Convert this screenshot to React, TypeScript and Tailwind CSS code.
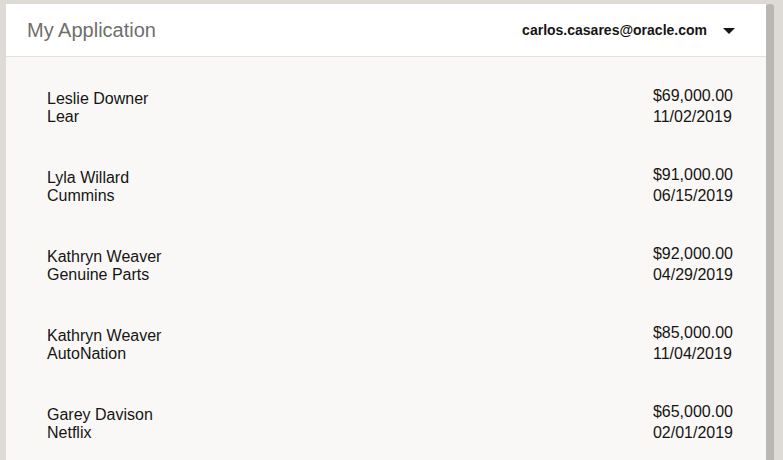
import React from "react";

interface Deal {
  name: string;
  company: string;
  amount: string;
  date: string;
}

const deals: Deal[] = [
  { name: "Leslie Downer", company: "Lear", amount: "$69,000.00", date: "11/02/2019" },
  { name: "Lyla Willard", company: "Cummins", amount: "$91,000.00", date: "06/15/2019" },
  { name: "Kathryn Weaver", company: "Genuine Parts", amount: "$92,000.00", date: "04/29/2019" },
  { name: "Kathryn Weaver", company: "AutoNation", amount: "$85,000.00", date: "11/04/2019" },
  { name: "Garey Davison", company: "Netflix", amount: "$65,000.00", date: "02/01/2019" },
];

const DealRow: React.FC<{ deal: Deal }> = ({ deal }) => (
  <div className="h-[79px] shrink-0 flex items-center pl-[41px] pr-[33px]">
    <div className="flex w-full items-end justify-between">
      <div className="text-[16px] leading-[18px] mb-[1px]">
        <div>{deal.name}</div>
        <div>{deal.company}</div>
      </div>
      <div className="text-[16px] leading-[21px]">
        <div>{deal.amount}</div>
        <div>{deal.date}</div>
      </div>
    </div>
  </div>
);

export default function App() {
  return (
    <div className="h-[460px] w-[783px] overflow-hidden bg-[#dedbd6] flex pt-[4px] pl-[6px] font-['Liberation_Sans',Arial,sans-serif] text-[#161513]">
      <div className="w-[760px] flex flex-col">
        <header className="h-[53px] shrink-0 bg-white border-b border-[#e3e1de] flex items-center justify-between pl-[21px] pr-[31px]">
          <div className="text-[20px] text-[#6f6e6c]">My Application</div>
          <div className="flex items-center gap-[16px]">
            <span className="text-[14px] font-bold text-[#161513]">carlos.casares@oracle.com</span>
            <svg width="12" height="6" viewBox="0 0 12 6" className="mt-[1px]">
              <path d="M0 0 L12 0 L6 6 Z" fill="#161513" />
            </svg>
          </div>
        </header>
        <main className="flex-1 bg-[#f9f8f6] pt-[9px] flex flex-col">
          {deals.map((d, i) => (
            <DealRow key={i} deal={d} />
          ))}
        </main>
      </div>
      <div className="w-[8px] bg-[#bab7b2] rounded-t-[3px]" />
    </div>
  );
}
